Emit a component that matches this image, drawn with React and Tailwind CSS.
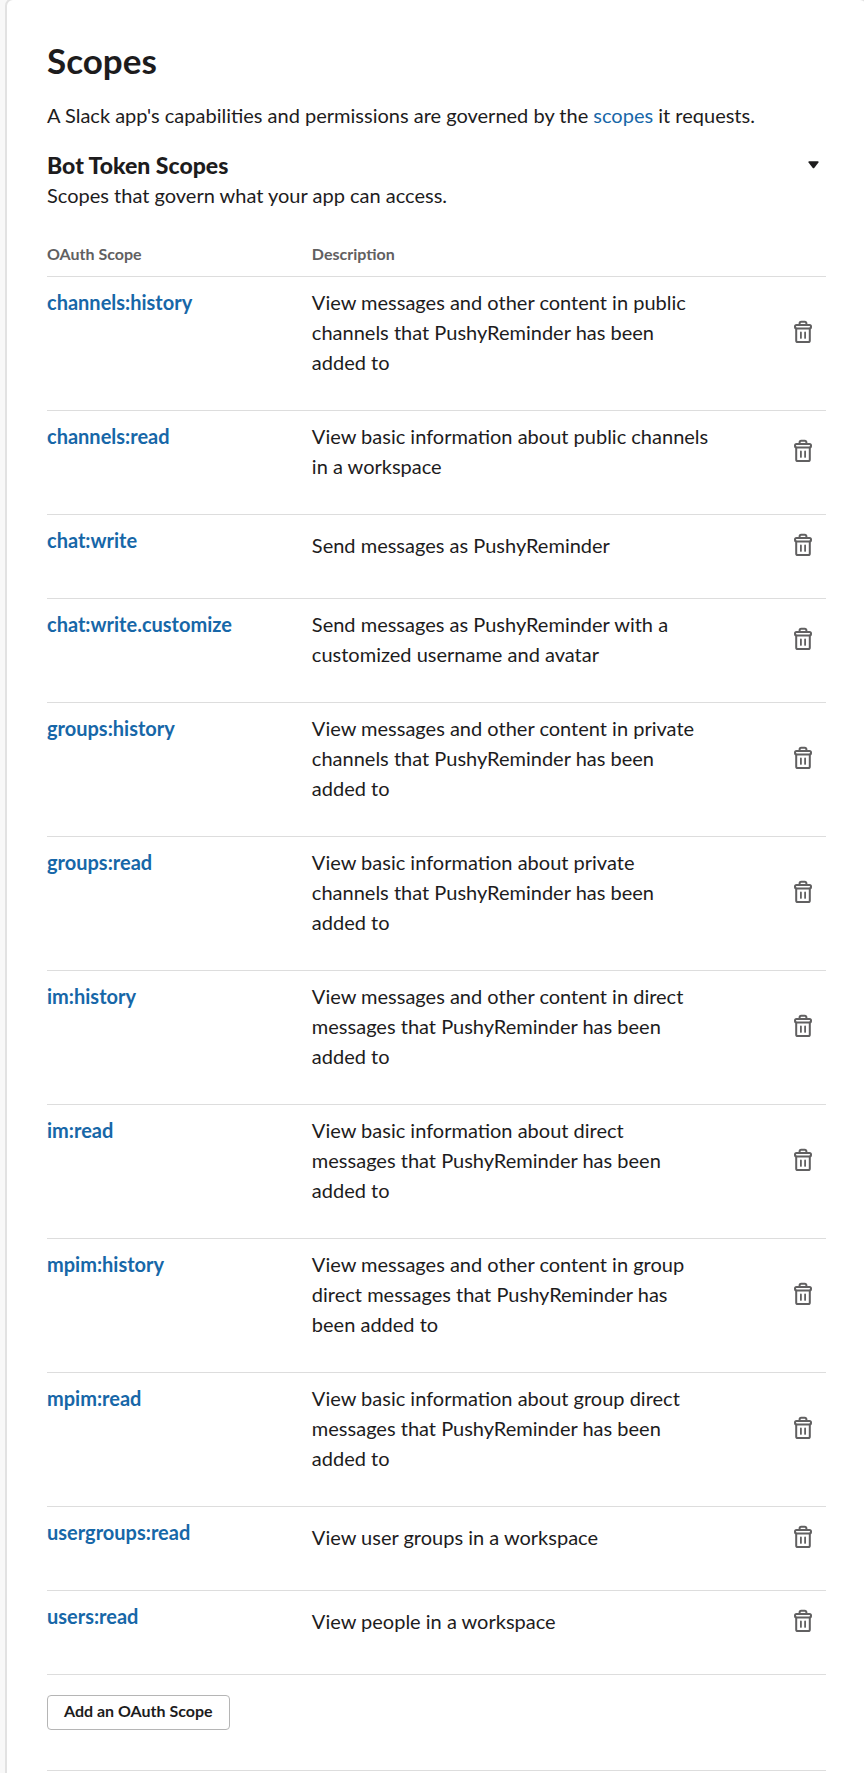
import { useState } from "react";

const SCOPES = [
  { name: "channels:history", description: "View messages and other content in public channels that PushyReminder has been added to" },
  { name: "channels:read", description: "View basic information about public channels in a workspace" },
  { name: "chat:write", description: "Send messages as PushyReminder" },
  { name: "chat:write.customize", description: "Send messages as PushyReminder with a customized username and avatar" },
  { name: "groups:history", description: "View messages and other content in private channels that PushyReminder has been added to" },
  { name: "groups:read", description: "View basic information about private channels that PushyReminder has been added to" },
  { name: "im:history", description: "View messages and other content in direct messages that PushyReminder has been added to" },
  { name: "im:read", description: "View basic information about direct messages that PushyReminder has been added to" },
  { name: "mpim:history", description: "View messages and other content in group direct messages that PushyReminder has been added to" },
  { name: "mpim:read", description: "View basic information about group direct messages that PushyReminder has been added to" },
  { name: "usergroups:read", description: "View user groups in a workspace" },
  { name: "users:read", description: "View people in a workspace" },
];

function TrashIcon() {
  return (
    <svg
      width="18"
      height="24"
      viewBox="0 0 18 24"
      fill="none"
      stroke="currentColor"
      strokeWidth="2"
      strokeLinecap="round"
      strokeLinejoin="round"
      aria-hidden="true"
    >
      <path d="M5.6 5V3.4a1.6 1.6 0 0 1 1.6-1.6h3.6a1.6 1.6 0 0 1 1.6 1.6V5" />
      <rect x="1" y="5" width="16" height="3.6" rx="1.5" />
      <path d="M2.2 8.6v11.9a1.6 1.6 0 0 0 1.6 1.6h10.4a1.6 1.6 0 0 0 1.6-1.6V8.6" />
      <path d="M6.9 12.5v5.4M11.1 12.5v5.4" strokeWidth="1.8" />
    </svg>
  );
}

export default function App() {
  const [scopes, setScopes] = useState(SCOPES);
  const [open, setOpen] = useState(true);

  const handleDelete = (name) => {
    setScopes(scopes.filter((scope) => scope.name !== name));
  };

  return (
    <div className="min-h-screen overflow-hidden bg-[#f8f8f8] pl-[5px] font-['Lato',sans-serif] text-[20px] leading-[30px] text-[#1d1c1d]">
      <main className="-mt-0.5 -mr-1 rounded-lg border-2 border-[#e2e2e2] bg-white px-10 pt-10 pb-10">
        <h1 className="text-[35px] leading-10 font-bold">Scopes</h1>
        <p className="mt-5">
          A Slack app's capabilities and permissions are governed by the{" "}
          <a href="#scopes" className="text-[#1767a8] hover:underline">scopes</a> it requests.
        </p>

        {/* Section header */}
        <div className="mt-5 flex items-center justify-between">
          <h2 className="text-[23px] leading-[30px] font-black">Bot Token Scopes</h2>
          <button
            className="px-[7px] py-2"
            aria-label="Toggle Bot Token Scopes"
            aria-expanded={open}
            onClick={() => setOpen(!open)}
          >
            <svg width="11" height="8" viewBox="0 0 12 8" fill="currentColor" aria-hidden="true">
              <path d="M1.2 0h9.6q1.3 0 .6 1.2L7 6.9q-1 1.2-2 0L.6 1.2Q-.1 0 1.2 0Z" />
            </svg>
          </button>
        </div>
        <p>Scopes that govern what your app can access.</p>

        {/* Scope table */}
        {open && (
          <table className="mt-7 w-full text-left">
            <thead>
              <tr className="border-b border-[#dddddd] text-[16px] leading-6 text-[#616061]">
                <th className="w-[34%] pt-1 pb-2.5 font-bold">OAuth Scope</th>
                <th className="pt-1 pb-2.5 font-bold">Description</th>
                <td></td>
              </tr>
            </thead>
            <tbody>
              {scopes.map((scope) => (
                <tr key={scope.name} className="border-b border-[#dddddd]">
                  <td className="pt-2.5 pb-[33px] align-top font-bold">
                    <a href={`#${scope.name}`} className="text-[#1767a8] hover:underline">
                      {scope.name}
                    </a>
                  </td>
                  <td className="pt-2.5 pb-[33px] align-middle">
                    <p className="max-w-[400px]">{scope.description}</p>
                  </td>
                  <td className="w-[46px] pt-2.5 pb-[33px] align-middle">
                    <button
                      className="flex h-10 w-[46px] items-center justify-center text-[#616061] hover:text-[#1d1c1d]"
                      aria-label={`Remove ${scope.name}`}
                      onClick={() => handleDelete(scope.name)}
                    >
                      <TrashIcon />
                    </button>
                  </td>
                </tr>
              ))}
            </tbody>
          </table>
        )}

        <button className="mt-5 rounded border border-[#b5b5b5] px-4 pt-0.5 pb-1.5 text-[16px] leading-[25px] font-bold hover:bg-gray-50">
          Add an OAuth Scope
        </button>

        <hr className="mt-10 border-[#dddddd]" />
      </main>
    </div>
  );
}
